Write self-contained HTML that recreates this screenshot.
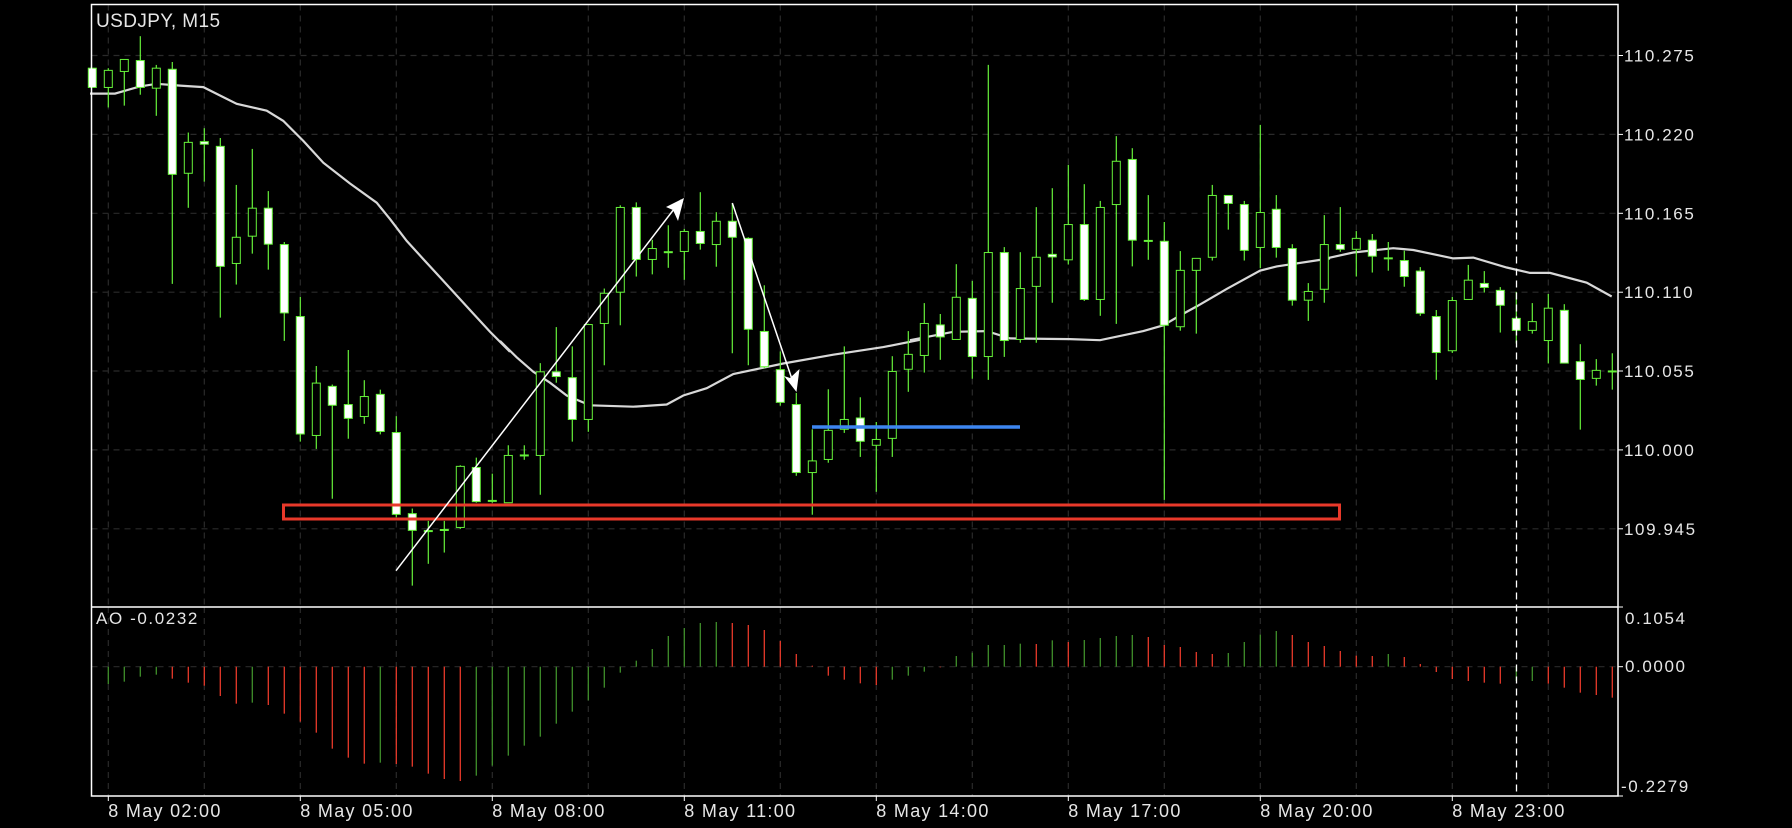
<!DOCTYPE html>
<html><head><meta charset="utf-8"><style>
html,body{margin:0;padding:0;background:#000;width:1792px;height:828px;overflow:hidden}
svg{display:block}
text{font-family:"Liberation Sans",sans-serif;fill:#e6e6e6}
</style></head><body>
<svg id="s" width="1792" height="828" viewBox="0 0 1792 828" xmlns="http://www.w3.org/2000/svg">
<rect width="1792" height="828" fill="#000"/>
<g id="grid"></g>
<g id="ao"></g>
<g id="ma"></g>
<g id="candles"></g>
<g id="draw"></g>
<g id="frame"></g>
</svg>
<script>
var NS="http://www.w3.org/2000/svg";
function el(p,t,a,txt){var e=document.createElementNS(NS,t);for(var k in a)e.setAttribute(k,a[k]);if(txt!==undefined)e.textContent=txt;document.getElementById(p).appendChild(e);return e;}
function X(i){return 108.3+16*i;}
function Y(z){return 30+z/2.75;}
var L=91.5,R=1618,T=4.5,D=607,B=796;
var prices=[["110.275",55.5],["110.220",134.4],["110.165",213.3],["110.110",292.2],["110.055",371],["110.000",449.9],["109.945",528.8]];
prices.forEach(function(p){
 el("grid","line",{x1:L,x2:R,y1:p[1],y2:p[1],stroke:"#2a2a2a","stroke-width":1.2,"stroke-dasharray":"6,5"});
 el("grid","line",{x1:R,x2:R+5,y1:p[1],y2:p[1],stroke:"#fff","stroke-width":1});
 el("grid","text",{x:1624,y:p[1]+6,"font-size":"17","letter-spacing":"1.6"},p[0]);
});
for(var k=0;k<16;k++){var gx=108.3+96*k;if(gx>R)break;
 el("grid","line",{x1:gx,x2:gx,y1:T,y2:D,stroke:"#2a2a2a","stroke-width":1.2,"stroke-dasharray":"6,5"});
 el("grid","line",{x1:gx,x2:gx,y1:D,y2:B,stroke:"#2a2a2a","stroke-width":1.2,"stroke-dasharray":"6,5"});}
el("grid","line",{x1:L,x2:R,y1:666.7,y2:666.7,stroke:"#2a2a2a","stroke-width":1.2,"stroke-dasharray":"6,5"});
[["0.1054",607,618],["0.0000",666.7,666],["-0.2279",796,786]].forEach(function(p){
 el("grid","line",{x1:R,x2:R+5,y1:p[1],y2:p[1],stroke:"#fff","stroke-width":1});
 el("grid","text",{x:p[0][0]=="-"?1621:1625,y:p[2]+6,"font-size":"17","letter-spacing":"1.6"},p[0]);});
var times=["8 May 02:00","8 May 05:00","8 May 08:00","8 May 11:00","8 May 14:00","8 May 17:00","8 May 20:00","8 May 23:00"];
times.forEach(function(t,j){var tx=108.3+192*j;
 el("grid","line",{x1:tx,x2:tx,y1:B,y2:B+5,stroke:"#fff","stroke-width":1});
 el("grid","text",{x:tx,y:817,"font-size":"18","letter-spacing":"1.3"},t);});
var ao=[[0,252,"G"],[1,245,"G"],[2,230,"G"],[3,224,"G"],[4,236,"R"],[5,248,"R"],[6,257,"R"],[7,288,"R"],[8,311,"R"],[9,308,"G"],[10,315,"R"],[11,341,"R"],[12,365,"R"],[13,398,"R"],[14,446,"R"],[15,473,"R"],[16,491,"R"],[17,488,"G"],[18,492,"R"],[19,500,"R"],[20,521,"R"],[21,537,"R"],[22,543,"R"],[23,527,"G"],[24,497,"G"],[25,467,"G"],[26,437,"G"],[27,410,"G"],[28,371,"G"],[29,335,"G"],[30,301,"G"],[31,263,"G"],[32,218,"G"],[33,182,"G"],[34,147,"G"],[35,108,"G"],[36,84,"G"],[37,69,"G"],[38,66,"G"],[39,69,"R"],[40,75,"R"],[41,90,"R"],[42,123,"R"],[43,162,"R"],[44,197,"R"],[45,227,"R"],[46,239,"R"],[47,250,"R"],[48,255,"R"],[49,239,"G"],[50,227,"G"],[51,215,"G"],[52,202,"R"],[53,168,"G"],[54,158,"G"],[55,135,"G"],[56,135,"G"],[57,131,"G"],[58,132,"R"],[59,121,"G"],[60,126,"R"],[61,120,"G"],[62,114,"G"],[63,108,"G"],[64,105,"G"],[65,111,"R"],[66,135,"R"],[67,141,"R"],[68,156,"R"],[69,162,"R"],[70,159,"G"],[71,126,"G"],[72,104,"G"],[73,93,"G"],[74,105,"R"],[75,126,"R"],[76,138,"R"],[77,153,"R"],[78,167,"R"],[79,168,"R"],[80,162,"G"],[81,171,"R"],[82,192,"R"],[83,216,"R"],[84,237,"R"],[85,243,"R"],[86,248,"R"],[87,251,"R"],[88,243,"G"],[89,243,"G"],[90,251,"R"],[91,263,"R"],[92,278,"R"],[93,285,"R"],[94,293,"R"]];
ao.forEach(function(a){el("ao","line",{x1:X(a[0]),x2:X(a[0]),y1:666.7,y2:600+a[1]/3,stroke:a[2]=="G"?"#3f8f2b":"#e8392a","stroke-width":1.3});});
var c=[[-1,105,105,158,158,"W"],[0,105,111,158,213,"B"],[1,81,81,114,208,"B"],[2,17,84,158,178,"W"],[3,96,105,160,236,"B"],[4,88,108,397,698,"W"],[5,282,309,394,489,"B"],[6,270,307,314,417,"W"],[7,297,320,650,791,"W"],[8,426,570,642,700,"B"],[9,327,490,567,615,"B"],[10,443,490,589,659,"W"],[11,583,590,778,855,"W"],[12,734,788,1111,1132,"W"],[13,924,971,1115,1152,"B"],[14,975,980,1032,1289,"W"],[15,880,1030,1068,1124,"W"],[16,963,1008,1063,1083,"B"],[17,989,1002,1104,1112,"W"],[18,1062,1107,1332,1340,"W"],[19,1316,1330,1376,1528,"W"],[20,1350,1378,1378,1468,"D"],[21,1350,1375,1375,1437,"D"],[22,1197,1200,1368,1372,"B"],[23,1176,1203,1297,1300,"W"],[24,1220,1295,1295,1300,"D"],[25,1142,1170,1300,1300,"B"],[26,1142,1170,1170,1182,"D"],[27,916,940,1170,1278,"B"],[28,817,940,953,970,"W"],[29,870,956,1071,1132,"W"],[30,808,810,1071,1105,"B"],[31,711,724,807,922,"B"],[32,482,488,721,812,"B"],[33,474,488,631,678,"W"],[34,577,601,631,672,"B"],[35,537,611,611,654,"D"],[36,547,554,609,687,"B"],[37,446,554,587,604,"W"],[38,501,526,590,651,"B"],[39,477,526,570,889,"W"],[40,570,573,823,922,"W"],[41,702,829,926,930,"W"],[42,884,934,1024,1033,"W"],[43,998,1030,1217,1226,"W"],[44,1098,1185,1217,1333,"B"],[45,988,1101,1181,1190,"B"],[46,870,1071,1098,1108,"B"],[47,1010,1067,1131,1174,"W"],[48,1078,1126,1142,1270,"B"],[49,897,939,1123,1174,"B"],[50,828,892,933,995,"B"],[51,751,807,895,942,"B"],[52,781,811,844,907,"W"],[53,644,735,851,851,"B"],[54,690,738,898,959,"W"],[55,96,612,898,962,"B"],[56,597,612,854,899,"W"],[57,611,711,851,860,"B"],[58,487,625,705,860,"B"],[59,435,617,624,750,"W"],[60,371,535,632,645,"B"],[61,424,535,741,745,"W"],[62,470,488,741,786,"B"],[63,292,361,480,808,"B"],[64,325,356,578,650,"W"],[65,454,580,580,632,"D"],[66,528,581,812,1292,"W"],[67,608,661,816,827,"B"],[68,628,628,661,835,"B"],[69,426,455,625,634,"B"],[70,455,455,477,549,"W"],[71,470,480,606,634,"W"],[72,261,502,598,655,"B"],[73,454,493,598,626,"W"],[74,589,601,743,758,"W"],[75,696,719,743,800,"B"],[76,509,590,713,750,"B"],[77,487,590,603,610,"W"],[78,553,573,603,678,"B"],[79,561,578,622,667,"W"],[80,583,628,628,662,"D"],[81,607,634,678,706,"W"],[82,652,663,779,786,"W"],[83,770,788,887,962,"W"],[84,734,744,882,888,"B"],[85,646,688,741,741,"B"],[86,663,697,708,722,"W"],[87,707,716,757,832,"W"],[88,720,793,826,862,"W"],[89,751,802,826,835,"B"],[90,726,765,854,917,"B"],[91,754,771,916,916,"W"],[92,864,912,961,1099,"W"],[93,905,936,958,978,"B"],[94,889,939,939,989,"D"]];
var G="#66f23a";
c.forEach(function(d){var x=X(d[0]);
 el("candles","line",{x1:x,x2:x,y1:Y(d[1]),y2:Y(d[4]),stroke:G,"stroke-width":1.2});
 if(d[5]=="D"){el("candles","line",{x1:x-4.5,x2:x+4.5,y1:Y(d[2]),y2:Y(d[2]),stroke:G,"stroke-width":2});}
 else{var h=Math.max(Y(d[3])-Y(d[2]),2);el("candles","rect",{x:x-4,y:Y(d[2]),width:8,height:h,fill:d[5]=="W"?"#fff":"#000",stroke:G,"stroke-width":1});}
});
var segs=[[90,[[0,175],[75,175],[150,155],[200,148],[270,153],[340,157],[390,180],[440,203],[530,222],[580,250],[640,305],[700,365],[780,422],[860,475],[900,520],[950,580],[1000,630],[1050,680],[1100,730],[1150,780],[1200,830],[1260,885]]],
[500,[[0,855],[50,900],[100,940],[150,970],[200,1005],[270,1032],[400,1036],[500,1030],[550,1005],[620,985],[700,946],[850,917],[1000,893],[1150,872],[1260,852]]],
[910,[[0,853],[130,830],[230,828],[300,848],[480,850],[570,853],[700,828],[760,812],[810,785],[860,760],[950,712],[1050,662],[1100,650],[1260,628]]],
[1320,[[0,632],[100,612],[220,600],[280,605],[400,628],[460,626],[560,653],[630,668],[690,668],[800,695],[875,733]]]];
var pts=[];segs.forEach(function(s){s[1].forEach(function(p){pts.push((s[0]+p[0]/3).toFixed(1)+","+Y(p[1]).toFixed(1));});});
el("ma","polyline",{points:pts.join(" "),fill:"none",stroke:"#d8d8d8","stroke-width":2.2});
el("draw","rect",{x:283.5,y:505,width:1056,height:14,fill:"none",stroke:"#e8392a","stroke-width":3});
el("draw","line",{x1:812,x2:1020,y1:427,y2:427,stroke:"#3d86f0","stroke-width":3.5});
el("draw","line",{x1:396,y1:570.7,x2:681,y2:200,stroke:"#fff","stroke-width":1.5});
el("draw","polygon",{points:"684,198 666,207 673,210 678,221",fill:"#fff"});
el("draw","line",{x1:732.3,y1:203,x2:795,y2:388,stroke:"#fff","stroke-width":1.5});
el("draw","polygon",{points:"796.5,392 784,376 790,378 799.5,369",fill:"#fff"});
el("draw","line",{x1:1516.5,x2:1516.5,y1:T,y2:B,stroke:"#fff","stroke-width":1.3,"stroke-dasharray":"7,5"});
el("frame","rect",{x:L,y:T,width:R-L,height:B-T,fill:"none",stroke:"#fff","stroke-width":1.5});
el("frame","line",{x1:L,x2:R,y1:D,y2:D,stroke:"#fff","stroke-width":1.5});
el("frame","text",{x:96,y:27,"font-size":"19","letter-spacing":"0.4"},"USDJPY, M15");
el("frame","text",{x:96,y:624,"font-size":"17","letter-spacing":"1.6"},"AO -0.0232");
</script>
</body></html>
